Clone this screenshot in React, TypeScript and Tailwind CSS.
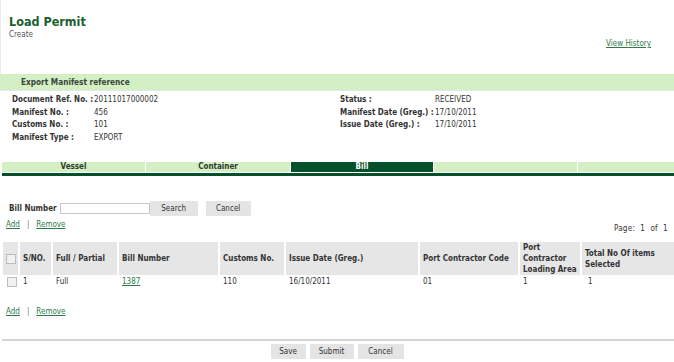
import React from "react";

const link = "text-[#2f7a4c] underline";

const Check = () => (
  <span className="inline-block w-[10px] h-[10px] border border-[#bdbdbd] bg-[#f1f1f1]" />
);

const AddRemove = () => (
  <div className="flex items-center pl-[6px] leading-[9px]">
    <a href="#" className={link}>Add</a>
    <span className="ml-[7px] text-[#777]">|</span>
    <a href="#" className={`${link} ml-[7px]`}>Remove</a>
  </div>
);

export default function App() {
  const cols =
    "grid grid-cols-[17px_33px_66px_101px_66px_134px_100px_62px_1fr]";

  const headers = [
    "S/NO.",
    "Full / Partial",
    "Bill Number",
    "Customs No.",
    "Issue Date (Greg.)",
    "Port Contractor Code",
    "Port Contractor Loading Area",
    "Total No Of items Selected",
  ];

  return (
    <div className="w-[674px] h-[362px] overflow-hidden bg-white text-[#333] text-[8px] font-['DejaVu_Sans_Condensed','DejaVu_Sans',sans-serif]">
      {/* HEADER */}
      <div className="flex justify-between h-[74px] pl-2 pr-[23px] pt-[14px] border-l border-[#ececec]">
        <div>
          <h1 className="text-[12.5px] leading-[16px] font-bold text-[#1b5e30]">
            Load Permit
          </h1>
          <div className="leading-[9px] text-[#555]">Create</div>
        </div>
        <a href="#" className={`${link} mt-[25px] h-[10px] leading-[9px]`}>
          View History
        </a>
      </div>

      {/* EXPORT MANIFEST */}
      <div className="h-[16px] bg-[#d4efc4] pl-[21px] flex items-center font-bold text-[#3a463a] text-[8.2px]">
        Export Manifest reference
      </div>
      <div className="h-[72px] border-t border-[#e6e6e6] pt-[3px] pl-3">
        <div className="grid grid-cols-[82px_246px_95px_1fr] auto-rows-[12.5px] items-center whitespace-nowrap">
          <span className="font-bold">Document Ref. No. :</span>
          <span>20111017000002</span>
          <span className="font-bold">Status :</span>
          <span>RECEIVED</span>

          <span className="font-bold">Manifest No. :</span>
          <span>456</span>
          <span className="font-bold">Manifest Date (Greg.) :</span>
          <span>17/10/2011</span>

          <span className="font-bold">Customs No. :</span>
          <span>101</span>
          <span className="font-bold">Issue Date (Greg.) :</span>
          <span>17/10/2011</span>

          <span className="font-bold">Manifest Type :</span>
          <span>EXPORT</span>
        </div>
      </div>

      {/* TABS */}
      <div className="pl-[2px]">
        <div className="flex gap-px h-[10px] leading-[10px] font-bold">
          <div className="w-[143px] bg-[#d4efc4] text-center text-[#2e3b2e]">Vessel</div>
          <div className="w-[144px] bg-[#d4efc4] text-center text-[#2e3b2e]">Container</div>
          <div className="w-[142px] bg-[#05502a] text-center text-white">Bill</div>
          <div className="w-[143px] bg-[#d4efc4]" />
          <div className="flex-1 bg-[#d4efc4]" />
        </div>
        <div className="mt-px h-[3px] bg-[#05502a]" />
      </div>

      {/* SEARCH */}
      <div className="mt-[25px] flex items-center pl-[9px] h-[15px]">
        <span className="font-bold">Bill Number</span>
        <input className="ml-[3px] w-[90px] h-[11px] border border-[#c8c8c8] bg-white outline-none" />
        <button className="w-[48px] h-[15px] bg-[#e4e4e4] text-[#333]">Search</button>
        <button className="ml-[8px] w-[45px] h-[15px] bg-[#e4e4e4] text-[#333]">Cancel</button>
      </div>

      <div className="mt-[4px] flex justify-between items-start pr-[6px]">
        <AddRemove />
        <span className="pt-[4px] leading-[9px] tracking-[0.3px]">Page:&nbsp; 1&nbsp; of&nbsp; 1</span>
      </div>

      {/* TABLE */}
      <div className="mt-[9px] pl-[3px]">
        <div className={`${cols} h-[30px] font-bold`}>
          <div className="bg-[#e6e6e6] border-r-2 border-white flex items-center justify-center">
            <Check />
          </div>
          {headers.map((h, i) => (
            <div
              key={i}
              className={`bg-[#e6e6e6] flex items-center px-[3px] leading-[11px] ${
                i < headers.length - 1 ? "border-r-2 border-white" : ""
              }`}
            >
              {h}
            </div>
          ))}
        </div>
        <div className={`${cols} h-[19px] items-center`}>
          <div className="flex justify-center">
            <Check />
          </div>
          <div className="px-[3px]">1</div>
          <div className="px-[3px]">Full</div>
          <div className="px-[3px]">
            <a href="#" className={link}>1387</a>
          </div>
          <div className="px-[3px]">110</div>
          <div className="px-[3px]">16/10/2011</div>
          <div className="px-[3px]">01</div>
          <div className="px-[3px]">1</div>
          <div className="px-[6px]">1</div>
        </div>
      </div>

      <div className="mt-[16px]">
        <AddRemove />
      </div>

      {/* FOOTER */}
      <div className="mt-[23px] ml-[2px] border-t-2 border-[#d4d4d4]" />
      <div className="mt-[3px] flex justify-center gap-[4px]">
        <button className="w-[35px] h-[15px] bg-[#e4e4e4] text-[#333]">Save</button>
        <button className="w-[44px] h-[15px] bg-[#e4e4e4] text-[#333]">Submit</button>
        <button className="w-[46px] h-[15px] bg-[#e4e4e4] text-[#333]">Cancel</button>
      </div>
    </div>
  );
}
